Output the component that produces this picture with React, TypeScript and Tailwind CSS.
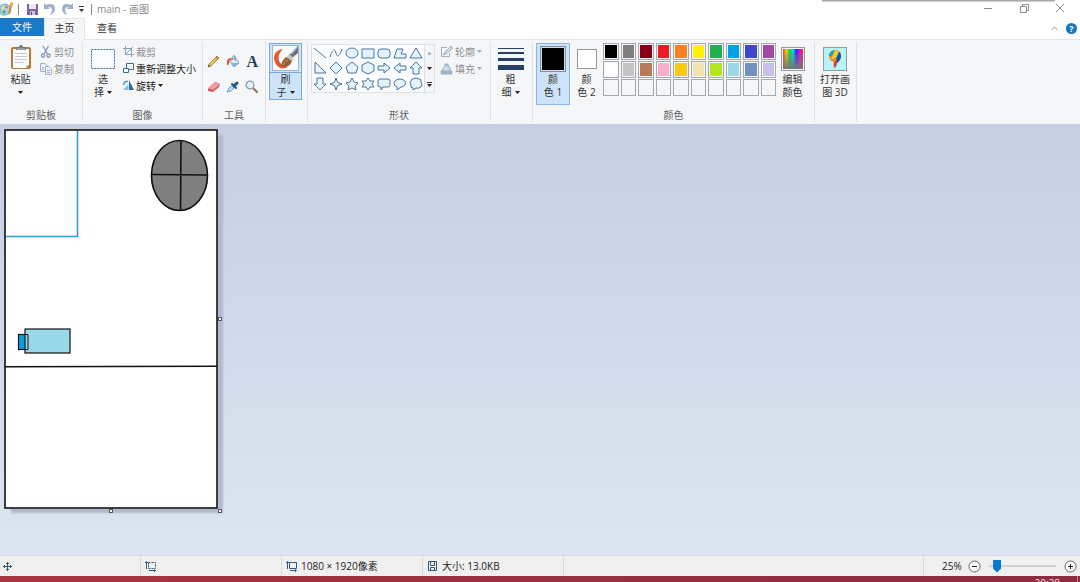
import React, { useState } from "react";

const GROUP_LINE = "border-r border-[#dfe2e6]";

const palette = [
  "#000000", "#7f7f7f", "#880015", "#ed1c24", "#ff7f27", "#fff200", "#22b14c", "#00a2e8", "#3f48cc", "#a349a4",
  "#ffffff", "#c3c3c3", "#b97a57", "#ffaec9", "#ffc90e", "#efe4b0", "#b5e61d", "#99d9ea", "#7092be", "#c8bfe7",
  "", "", "", "", "", "", "", "", "", "",
];

const shapes = [
  { name: "直线", d: "M1 2 13 12" },
  { name: "曲线", d: "M1 11C4 2 6 3 7 7S10 12 13 3" },
  { name: "椭圆", d: "M7 2a6 5 0 1 1 0 10A6 5 0 0 1 7 2Z" },
  { name: "矩形", d: "M1 3H13V12H1Z" },
  { name: "圆角矩形", d: "M4 3H10Q13 3 13 6V9Q13 12 10 12H4Q1 12 1 9V6Q1 3 4 3Z" },
  { name: "多边形", d: "M4 3H10L8 8H13V12H1Z" },
  { name: "三角形", d: "M7 2 13 12H1Z" },
  { name: "直角三角形", d: "M2 1V12H13Z" },
  { name: "菱形", d: "M7 1 13 7 7 13 1 7Z" },
  { name: "五边形", d: "M7 1 13 6 11 12H3L1 6Z" },
  { name: "六边形", d: "M7 1 13 4V10L7 13 1 10V4Z" },
  { name: "右箭头", d: "M1 5H7V2L13 7 7 12V9H1Z" },
  { name: "左箭头", d: "M13 5H7V2L1 7 7 12V9H13Z" },
  { name: "上箭头", d: "M7 1 13 7H10V13H4V7H1Z" },
  { name: "下箭头", d: "M4 1H10V7H13L7 13 1 7H4Z" },
  { name: "四角星", d: "M7 1 8.500 5.500 13 7 8.500 8.500 7 13 5.500 8.500 1 7 5.500 5.500Z" },
  { name: "五角星", d: "M7 1 9 5 13 6 10 9 11 13 7 11 3 13 4 9 1 6 5 5Z" },
  { name: "六角星", d: "M7 1 9 4H13L11 7 13 10H9L7 13 5 10H1L3 7 1 4H5Z" },
  { name: "圆角标注", d: "M3 2H11Q13 2 13 4V8Q13 10 11 10H6L4 13V10H3Q1 10 1 8V4Q1 2 3 2Z" },
  { name: "椭圆标注", d: "M4 10C-1 8 1 2 7 2S15 9 8 10L4 13Z" },
  { name: "云形标注", d: "M4 2Q7 0 10 2 13 2 12 5 14 8 12 10 9 12 7 11L4 13 4 11Q1 11 2 8 0 5 2 4 2 2 4 2Z" },
];

function Arrow({ light }: { light?: boolean }) {
  return (
    <svg width="5" height="3" viewBox="0 0 5 3" className="shrink-0">
      <path d="M0 0H5L2.5 3Z" fill={light ? "#a5a7aa" : "#222"} />
    </svg>
  );
}

type GroupProps = { label?: string; width: string; children: React.ReactNode };

function Group({ label, width, children }: GroupProps) {
  return (
    <section className={`${width} ${GROUP_LINE} flex shrink-0 flex-col`}>
      <div className="flex flex-1 items-start pt-px">{children}</div>
      <div className="h-[14px] text-center leading-[14px] text-[#5c5f63]">{label}</div>
    </section>
  );
}

type SmallProps = { icon: React.ReactNode; text: string; disabled?: boolean; arrow?: boolean };

function SmallButton({ icon, text, disabled, arrow }: SmallProps) {
  return (
    <button
      disabled={disabled}
      className={`flex h-[17px] items-center gap-[2px] whitespace-nowrap ${
        disabled ? "text-[#8d8f92]" : "text-[#222]"
      }`}
    >
      {icon}
      <span>{text}</span>
      {arrow && <Arrow light={disabled} />}
    </button>
  );
}

type BigProps = { icon: React.ReactNode; lines: [string, string]; arrow?: boolean; className?: string };

function BigButton({ icon, lines, arrow, className = "w-[33px] border-transparent" }: BigProps) {
  return (
    <button className={`flex flex-col items-center border text-[#333] ${className}`}>
      <span className="flex h-[29px] items-center justify-center">{icon}</span>
      <span className="leading-[13px]">{lines[0]}</span>
      <span className="flex h-[13px] items-center gap-[3px] whitespace-nowrap leading-[13px]">
        {lines[1]}
        {arrow && <Arrow />}
      </span>
    </button>
  );
}

function PasteIcon() {
  return (
    <svg width="22" height="26" viewBox="0 0 22 26">
      <rect x="1" y="3" width="20" height="22" rx="2" fill="#b9783a" />
      <path d="M3 5H19V21L16 24H3Z" fill="#fbfcfd" />
      <path d="M16 24V21H19Z" fill="#c8ccd0" />
      <path d="M5 9.500H17M5 12.500H17M5 15.500H17M5 18.500H14" stroke="#c5ccd4" />
      <path d="M6 6V3H9Q9 1 11 1T13 3H16V6Z" fill="#747a80" />
      <path d="M7 5H15" stroke="#bfc5ca" />
    </svg>
  );
}

function CutIcon() {
  return (
    <svg width="12" height="12" viewBox="0 0 12 12" fill="none" stroke="#8a9cbc" strokeWidth="1.400">
      <path d="M3 0 7.500 8M8.500 0 4 8" />
      <ellipse cx="3" cy="9.500" rx="1.500" ry="1.800" />
      <ellipse cx="8.500" cy="9.500" rx="1.500" ry="1.800" />
    </svg>
  );
}

function CopyIcon() {
  return (
    <svg width="12" height="12" viewBox="0 0 12 12" fill="#edf2fa" stroke="#a1b2cf">
      <path d="M.5.5H5L7.500 3V8.500H.5Z" />
      <path d="M5.500 3.500H9L11.500 6V11.500H5.500Z" />
      <path d="M7 7.500H10M7 9.500H10M2 4.500H4M2 6.500H4" />
    </svg>
  );
}

function CropIcon() {
  return (
    <svg width="11" height="11" viewBox="0 0 11 11" fill="none" stroke="#8f9fb9">
      <path d="M2.500 0V8.500H11M0 2.500H8.500V11M2.500 8.500 10 1" />
    </svg>
  );
}

function ResizeIcon() {
  return (
    <svg width="11" height="11" viewBox="0 0 11 11" fill="#f7fbff" stroke="#376a9e">
      <path d="M3.500.5H10.500V6.500H3.500Z" />
      <path d="M.5 5.500H5.500V9.500H.5Z" />
    </svg>
  );
}

function RotateIcon() {
  return (
    <svg width="11" height="11" viewBox="0 0 11 11">
      <path d="M6 0V10H11Z" fill="#2d70a8" />
      <path d="M5.500 4V10H0Z" fill="#8fc0e2" />
      <path d="M.5 5Q1 1 5 1.500" fill="none" stroke="#388cc0" strokeWidth="1.300" />
    </svg>
  );
}

const tools = [
  {
    name: "铅笔",
    art: (
      <>
        <path d="M1 12 2 9 10 1 12 3 4 11Z" fill="#e6c05a" stroke="#8a6d32" strokeWidth=".7" />
        <path d="M1 12 2 10 3 11Z" fill="#333" />
        <path d="M9 2 11 4" stroke="#9a5149" />
      </>
    ),
  },
  {
    name: "用颜色填充",
    art: (
      <>
        <path d="M4 7 9 2 13 8 8 12Z" fill="#dfecf6" stroke="#7fa3c0" />
        <path d="M6 5Q6 0 9 1V6" fill="none" stroke="#6c8daa" />
        <path d="M6 3Q0 2 1 10 3 11 3 7Z" fill="#d9562b" />
        <path d="M5 8 13 8 8 12Z" fill="#7fb4dc" />
      </>
    ),
  },
  { name: "文本", art: null },
  {
    name: "橡皮擦",
    art: (
      <>
        <path d="M1 9 8 2 13 4 12 7 6 12 1 11Z" fill="#d0585c" />
        <path d="M1 8 8 2 13 4 6 10Z" fill="#f09c9b" />
      </>
    ),
  },
  {
    name: "颜色选取器",
    art: (
      <>
        <path d="M1 12 3 8 7 5 9 7 5 11Z" fill="#bfdcf2" stroke="#4e8dbf" strokeWidth=".8" />
        <path d="M6 4 10 8" stroke="#245480" strokeWidth="2" strokeLinecap="round" />
        <path d="M8 6 11 3" stroke="#245480" strokeWidth="3" strokeLinecap="round" />
      </>
    ),
  },
  {
    name: "放大镜",
    art: (
      <>
        <path d="M8 8 12 12" stroke="#8f7159" strokeWidth="2" strokeLinecap="round" />
        <circle cx="5" cy="5" r="3.900" fill="#e3f1fb" stroke="#8798aa" strokeWidth="1.200" />
      </>
    ),
  },
];

function BrushIcon() {
  return (
    <svg width="27" height="26" viewBox="0 0 27 26">
      <rect x=".5" y=".5" width="26" height="25" fill="#f9fafb" stroke="#a9b2bc" />
      <path d="M11 4C2 5 0 13 4 19Q8 26 16 22L11 20C5 17 5 10 11 4Z" fill="#e25b2c" />
      <path d="M26 1 17 10 20 13 26 8Z" fill="#66737e" />
      <path d="M25 2 19 9" stroke="#bdc8d0" strokeWidth="1.500" />
      <path d="M17 9 22 13 19 17 14 13Z" fill="#ccc8be" />
      <path d="M14 12Q10 15 9 21 17 24 20 16Z" fill="#946038" />
      <path d="M11 20Q13 15 16 15" fill="none" stroke="#bb8b5c" />
    </svg>
  );
}

function DimensionIcon({ dashed }: { dashed?: boolean }) {
  return (
    <svg width="11" height="11" viewBox="0 0 11 11" fill="none" stroke="#345775">
      <path d="M3.500 1.500H10.500V7.500H3.500Z" strokeDasharray={dashed ? "2 1" : undefined} />
      <path d="M1.500 1V8M0 2 1.500.5 3 2M4 9.500H10M9 8.500 10.500 9.500 9 11" />
    </svg>
  );
}

function HistoryIcon({ flipped }: { flipped?: boolean }) {
  return (
    <svg width="12" height="12" viewBox="0 0 12 12" className={flipped ? "-scale-x-100" : ""}>
      <path d="M0 0 2 2Q11 -1 11 6 11 10 6 12 8 9 8 7 8 4 4 4L6 6H0Z" fill="#9db2c9" />
    </svg>
  );
}

function QuickAccess() {
  return (
    <div className="flex items-center">
      <svg width="14" height="14" viewBox="0 0 14 14">
        <path d="M0 4Q5 0 10 4L11 9Q8 14 2 13L0 11Z" fill="#a5d3e2" stroke="#5797af" strokeWidth=".7" />
        <circle cx="3" cy="6" r="1.500" fill="#f9e66b" />
        <circle cx="6.500" cy="5" r="1.300" fill="#df6c57" />
        <circle cx="4" cy="10" r="1.500" fill="#4c9c61" />
        <path d="M11.500 2 9 12" stroke="#d49136" strokeWidth="2" />
        <path d="M10 1 13 0 13 4 10 4Z" fill="#edae40" />
      </svg>
      <span className="ml-1 h-[11px] w-px bg-[#888]" />
      <button aria-label="保存" className="ml-2">
        <svg width="11" height="11" viewBox="0 0 11 11">
          <path d="M0 0H11V11H0Z" fill="#80629e" />
          <path d="M2 0H9V5H2Z" fill="#eee9f3" />
          <path d="M3 7H8V11H3Z" fill="#cec2d8" />
          <path d="M4 8H5V11H4Z" fill="#594171" />
        </svg>
      </button>
      <button aria-label="撤消" className="ml-[6px]">
        <HistoryIcon />
      </button>
      <button aria-label="重做" className="ml-[5px]">
        <HistoryIcon flipped />
      </button>
      <button aria-label="自定义快速访问工具栏" className="ml-[6px]">
        <svg width="5" height="6" viewBox="0 0 5 6">
          <path d="M0 0H5V1H0ZM0 3H5L2.500 6Z" fill="#333" />
        </svg>
      </button>
      <span className="ml-[7px] h-[11px] w-px bg-[#888]" />
    </div>
  );
}

function TitleBar() {
  return (
    <header className="relative flex h-[18px] shrink-0 items-center bg-white">
      <div className="absolute top-0 right-[25px] h-[2px] w-[233px] bg-gradient-to-b from-[#999] to-[#ddd]" />
      <QuickAccess />
      <h1 className="ml-[5px] text-[#8b8b8b]">main - 画图</h1>
      <div className="ml-auto flex items-center gap-[26px] pr-[15px] pb-[3px]">
        {[
          { name: "最小化", d: "M1 5.500H9" },
          { name: "向下还原", d: "M1.500 3.500H7.500V9.500H1.500ZM3.500 3V1.500H9.500V7.500H8" },
          { name: "关闭", d: "M1 1 9 9M9 1 1 9" },
        ].map((b) => (
          <button key={b.name} aria-label={b.name}>
            <svg width="10" height="10" viewBox="0 0 10 10" fill="none" stroke="#8c8c8c">
              <path d={b.d} />
            </svg>
          </button>
        ))}
      </div>
    </header>
  );
}

function TabRow() {
  return (
    <nav className="flex h-[21px] shrink-0 items-stretch bg-white">
      <button className="mb-[3px] w-[44px] bg-[#1979ca] text-white">文件</button>
      <button className="z-10 -mb-px w-[41px] border-x border-t border-[#e3e5e8] bg-[#f5f6f7] pb-[3px] text-[#333]">
        主页
      </button>
      <button className="w-[44px] pb-[2px] text-[#333]">查看</button>
      <div className="ml-auto flex items-center gap-2 pr-[3px]">
        <button aria-label="最小化功能区">
          <svg width="7" height="5" viewBox="0 0 7 5" fill="none" stroke="#999">
            <path d="M.5 4 3.500 1 6.500 4" />
          </svg>
        </button>
        <button
          aria-label="帮助"
          className="h-[11px] w-[11px] rounded-full bg-[#1475c8] text-[9px] leading-[11px] font-bold text-white"
        >
          ?
        </button>
      </div>
    </nav>
  );
}

function ShapeGallery() {
  return (
    <div className="mt-px ml-[3px] flex h-[49px] border border-[#dde1e6] bg-[#fafcfd]">
      <div className="grid grid-cols-7">
        {shapes.map((s) => (
          <button key={s.name} aria-label={s.name} className="flex w-[16px] items-center justify-center">
            <svg width="14" height="14" viewBox="0 0 14 14" stroke="#49769f" strokeWidth="1">
              <path d={s.d} fill={s.name === "直线" || s.name === "曲线" ? "none" : "#e5f4fc"} />
            </svg>
          </button>
        ))}
      </div>
      <div className="flex w-[10px] flex-col border-l border-[#dde1e6] bg-[#f5f6f7]">
        <button aria-label="上一行" className="flex flex-1 rotate-180 items-center justify-center">
          <Arrow light />
        </button>
        <button aria-label="下一行" className="flex flex-1 items-center justify-center">
          <Arrow />
        </button>
        <button aria-label="其他形状" className="flex flex-1 flex-col items-center justify-center gap-px">
          <span className="h-px w-[5px] bg-[#333]" />
          <Arrow />
        </button>
      </div>
    </div>
  );
}

function Ribbon() {
  const [color, setColor] = useState("#000000");

  return (
    <div className="flex h-[86px] shrink-0 border-t border-b border-t-[#e3e5e8] border-b-[#c9cfda] bg-[#f5f6f7] py-[2px]">
      <Group label="剪贴板" width="w-[83px]">
        <button className="ml-[3px] flex w-[35px] flex-col items-center pt-px text-[#333]">
          <PasteIcon />
          <span className="mt-[2px] leading-[14px]">粘贴</span>
          <span className="mt-[5px]">
            <Arrow />
          </span>
        </button>
        <div className="ml-[2px] flex flex-col">
          <SmallButton icon={<CutIcon />} text="剪切" disabled />
          <SmallButton icon={<CopyIcon />} text="复制" disabled />
        </div>
      </Group>

      <Group label="图像" width="w-[120px]">
        <BigButton
          className="ml-[2px] w-[36px] border-transparent"
          icon={
            <svg width="24" height="20" viewBox="0 0 24 20">
              <rect x=".5" y=".5" width="23" height="19" fill="#f9fcff" stroke="#3973a6" strokeDasharray="2 1" />
            </svg>
          }
          lines={["选", "择"]}
          arrow
        />
        <div className="ml-[2px] flex flex-col">
          <SmallButton icon={<CropIcon />} text="裁剪" disabled />
          <SmallButton icon={<ResizeIcon />} text="重新调整大小" />
          <SmallButton icon={<RotateIcon />} text="旋转" arrow />
        </div>
      </Group>

      <Group label="工具" width="w-[63px]">
        <div className="grid w-full grid-cols-3 gap-y-[8px] pt-[10px] pr-[3px] pl-px">
          {tools.map((t) => (
            <button key={t.name} aria-label={t.name} className="flex h-[17px] items-center justify-center">
              {t.art ? (
                <svg width="14" height="13" viewBox="0 0 14 13" fill="none">
                  {t.art}
                </svg>
              ) : (
                <span className="font-['Liberation_Serif',serif] text-[16px] font-bold text-[#263f5c]">A</span>
              )}
            </button>
          ))}
        </div>
      </Group>

      <Group width="w-[42px]">
        <button className="ml-[3px] flex h-[57px] w-[33px] flex-col items-center border border-[#79a9da] bg-[#cce3f9] text-[#333]">
          <span className="flex h-[29px] w-full items-center justify-center border-b border-[#79a9da]">
            <BrushIcon />
          </span>
          <span className="leading-[13px]">刷</span>
          <span className="flex items-center gap-[3px] leading-[13px]">
            子
            <Arrow />
          </span>
        </button>
      </Group>

      <Group label="形状" width="w-[183px]">
        <ShapeGallery />
        <div className="ml-[5px] flex flex-col">
          <SmallButton
            icon={
              <svg width="13" height="12" viewBox="0 0 13 12" fill="none" stroke="#9fb0c5">
                <path d="M7 1.500H1.500V10.500H9.500V7" />
                <path d="M3 9 5 6 11 0 13 2 6 8Z" fill="#d2dbe7" />
              </svg>
            }
            text="轮廓"
            disabled
            arrow
          />
          <SmallButton
            icon={
              <svg width="13" height="12" viewBox="0 0 13 12" fill="#d3dce8" stroke="#9fb0c5">
                <path d="M4 4 7 1 11 6 6 9 2 7ZM5 4V1H8V5" />
                <path d="M1 11V8H12V11Z" fill="#9eafc5" />
              </svg>
            }
            text="填充"
            disabled
            arrow
          />
        </div>
      </Group>

      <Group width="w-[42px]">
        <BigButton
          className="ml-[3px] w-[33px] border-transparent"
          icon={
            <svg width="26" height="22" viewBox="0 0 26 22" fill="#263f64">
              <path d="M0 0H26V1H0ZM0 4H26V6H0ZM0 10H26V13H0ZM0 17H26V22H0Z" />
            </svg>
          }
          lines={["粗", "细"]}
          arrow
        />
      </Group>

      <Group label="颜色" width="w-[282px]">
        <BigButton
          className="ml-[3px] h-[62px] w-[34px] border-[#8ab8e6] bg-[#cce3f9]"
          icon={
            <span className="h-[26px] w-[26px] border border-[#8b8f93] bg-[#d5dce3] p-px">
              <span className="block h-full" style={{ backgroundColor: color }} />
            </span>
          }
          lines={["颜", "色 1"]}
        />
        <BigButton
          icon={<span className="h-[20px] w-[20px] border border-[#999] bg-white" />}
          lines={["颜", "色 2"]}
        />
        <div className="grid w-[173px] grid-cols-10 gap-x-[2px] gap-y-[1px]">
          {palette.map((c, i) => (
            <button
              key={i}
              aria-label={c || "自定义颜色"}
              onClick={() => c && setColor(c)}
              className="h-[17px] border border-[#a5a8ac] p-px"
            >
              <span className="block h-full" style={{ backgroundColor: c || "#f5f6f7" }} />
            </button>
          ))}
        </div>
        <BigButton
          icon={
            <span className="h-[24px] w-[24px] border border-[#9a9a9a] p-px">
              <span className="block h-full bg-[linear-gradient(to_top,#777,transparent),linear-gradient(to_right,#f33,#fd0,#0d3,#0df,#22f,#e0e,#f22)]" />
            </span>
          }
          lines={["编辑", "颜色"]}
        />
      </Group>

      <Group width="w-[42px]">
        <BigButton
          className="ml-[2px] w-[36px] border-transparent"
          icon={
            <svg width="24" height="24" viewBox="0 0 24 24">
              <rect x=".5" y=".5" width="23" height="23" fill="#b4f5fa" stroke="#999" />
              <path d="M6 9Q6 3 12 3T18 9Q18 13 14 16L12 21Q10 19 11 15 6 14 6 9Z" fill="#ef8a27" />
              <path d="M14 4Q18 5 18 9 18 13 14 16L13 11Z" fill="#244f96" />
              <path d="M12 3 16 5 13 11 8 12Z" fill="#edcf31" />
              <path d="M6 9Q6 4 12 3L9 9Z" fill="#2c9db9" />
              <path d="M11 15 14 13 14 17 12 21Q10 19 11 15Z" fill="#d83d4c" />
            </svg>
          }
          lines={["打开画", "图 3D"]}
        />
      </Group>
    </div>
  );
}

function Canvas() {
  return (
    <main className="flex-1 bg-gradient-to-b from-[#c6cfe0] to-[#dce6f2] pt-1 pl-1">
      <div className="relative w-[214px] shadow-[6px_5px_2px_-1px_#b1b9cf]">
        <svg viewBox="0 0 214 380" className="block w-full" fill="none" stroke="#111" strokeWidth="1.600">
          <rect x="1" y="1" width="212" height="378" fill="#fff" />
          <path d="M73.500 2V107.500H2" stroke="#2d9bd5" />
          <ellipse cx="175.500" cy="46.500" rx="28" ry="35" fill="#7f7f7f" />
          <path d="M177 12 176.500 81M147.500 45.500 203.500 46" />
          <path d="M1 237.800 213 237.300" />
          <rect x="14.500" y="205.500" width="9" height="15" fill="#00a2e8" strokeWidth="1.200" />
          <rect x="21" y="200" width="45" height="24" fill="#99d9ea" strokeWidth="1.200" />
          <path d="M21 205.500H24V220.500H21" strokeWidth="1" />
        </svg>
        <span className="absolute top-[188px] -right-[4px] h-[4px] w-[4px] border border-[#555] bg-white" />
        <span className="absolute -bottom-[4px] left-[105px] h-[4px] w-[4px] border border-[#555] bg-white" />
        <span className="absolute -right-[4px] -bottom-[4px] h-[4px] w-[4px] border border-[#555] bg-white" />
      </div>
    </main>
  );
}

function StatusBar() {
  const [zoom, setZoom] = useState(25);
  const cell = "flex w-[141px] items-center gap-1 border-r border-[#d9dadb] pl-1";

  return (
    <footer className="flex h-[21px] shrink-0 border-t border-[#d2d7dc] bg-[#f0f0f0] text-[#222]">
      <div className="flex w-[141px] items-center border-r border-[#d9dadb] pl-[3px]">
        <svg width="9" height="9" viewBox="0 0 9 9" fill="none" stroke="#345775">
          <path d="M4.500 0V9M0 4.500H9M3 2 4.500.5 6 2M3 7 4.500 8.500 6 7M2 3 .5 4.500 2 6M7 3 8.500 4.500 7 6" />
        </svg>
      </div>
      <div className={cell}>
        <DimensionIcon dashed />
      </div>
      <div className={cell}>
        <DimensionIcon />
        <span>1080 × 1920像素</span>
      </div>
      <div className={cell}>
        <svg width="11" height="10" viewBox="0 0 11 10" fill="none" stroke="#345775">
          <path d="M1.500.5H9.500V9.500H1.500ZM3.500.5V4.500H7.500V.5M3.500 9.500V6.500H7.500V9.500" />
        </svg>
        <span>大小: 13.0KB</span>
      </div>
      <div className="ml-auto flex w-[157px] items-center border-l border-[#d9dadb] pr-[3px] pl-[18px]">
        <label htmlFor="zoom" className="w-[26px]">
          {zoom}%
        </label>
        <button aria-label="缩小" onClick={() => setZoom(Math.max(12, zoom - 12))}>
          <svg width="13" height="13" viewBox="0 0 13 13" fill="#fafafa" stroke="#666">
            <circle cx="6.500" cy="6.500" r="5.500" />
            <path d="M4 6.500H9" stroke="#222" />
          </svg>
        </button>
        <input
          id="zoom"
          type="range"
          min="12"
          max="200"
          value={zoom}
          onChange={(e) => setZoom(Number(e.target.value))}
          className="mx-2 h-[14px] min-w-0 flex-1 appearance-none bg-[linear-gradient(#cfd1d3,#cfd1d3)] bg-[length:100%_2px] bg-center bg-no-repeat [&::-webkit-slider-thumb]:h-[13px] [&::-webkit-slider-thumb]:w-[8px] [&::-webkit-slider-thumb]:appearance-none [&::-webkit-slider-thumb]:bg-[#0878d2] [&::-webkit-slider-thumb]:[clip-path:polygon(0_0,100%_0,100%_70%,50%_100%,0_70%)]"
        />
        <button aria-label="放大" onClick={() => setZoom(Math.min(200, zoom + 12))}>
          <svg width="13" height="13" viewBox="0 0 13 13" fill="#fafafa" stroke="#666">
            <circle cx="6.500" cy="6.500" r="5.500" />
            <path d="M4 6.500H9M6.500 4V9" stroke="#222" />
          </svg>
        </button>
      </div>
    </footer>
  );
}

export default function App() {
  return (
    <div className="flex min-h-screen flex-col overflow-hidden bg-white font-['Open_Sans','Noto_Sans_CJK_SC',sans-serif] text-[10px] leading-[14px]">
      <TitleBar />
      <TabRow />
      <Ribbon />
      <Canvas />
      <StatusBar />
      <div className="flex h-[6px] shrink-0 justify-end overflow-hidden bg-gradient-to-r from-[#a93440] via-[#98303f] to-[#8d2c40] pr-[2px] leading-[14px] text-[#f0dfe1]">
        <span className="h-[14px] border-r border-[#c08088] pr-[17px]">20:28</span>
      </div>
    </div>
  );
}
